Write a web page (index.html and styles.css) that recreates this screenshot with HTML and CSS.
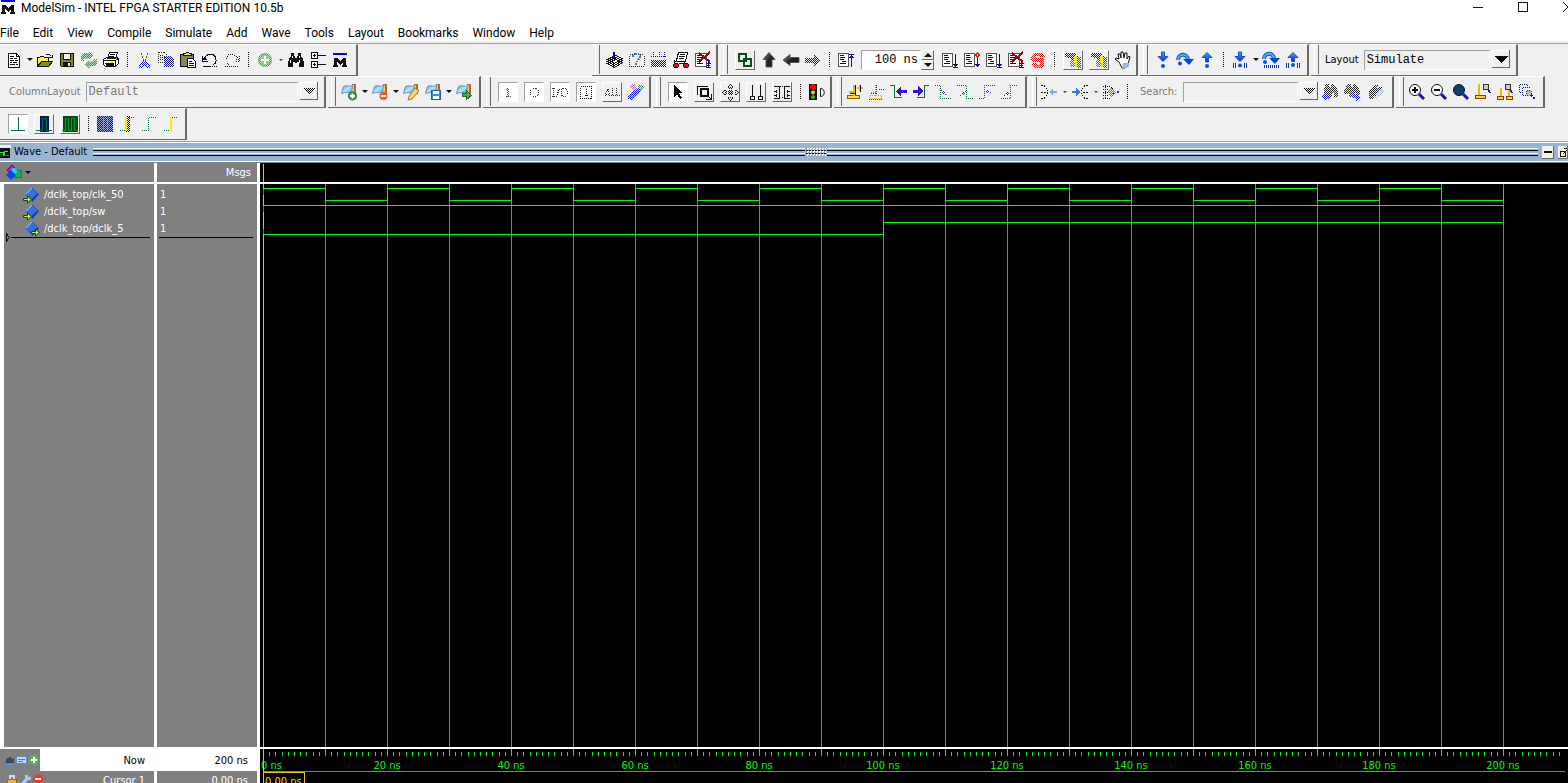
FILE: index.html
```html
<!DOCTYPE html>
<html lang="en">
<head>
<meta charset="utf-8">
<title>ModelSim - INTEL FPGA STARTER EDITION 10.5b</title>
<link rel="stylesheet" href="styles.css">
</head>
<body>
<svg class="sprite" aria-hidden="true">
<defs>
<pattern id="dk" width="2" height="2" patternUnits="userSpaceOnUse"><path fill="#222" d="M0 0h1v1h-1zM1 1h1v1h-1z"/></pattern>
<pattern id="dg" width="2" height="2" patternUnits="userSpaceOnUse"><path fill="#3a9a3a" d="M0 0h1v1h-1zM1 1h1v1h-1z"/></pattern>
<pattern id="db" width="2" height="2" patternUnits="userSpaceOnUse"><path fill="#1c1cf0" d="M0 0h1v1h-1zM1 1h1v1h-1z"/></pattern>
<pattern id="dn" width="2" height="2" patternUnits="userSpaceOnUse"><path fill="#101080" d="M0 0h1v1h-1zM1 1h1v1h-1z"/></pattern>
<pattern id="dr" width="2" height="2" patternUnits="userSpaceOnUse"><path fill="#e01010" d="M0 0h1v1h-1zM1 1h1v1h-1z"/></pattern>
<pattern id="dp" width="2" height="2" patternUnits="userSpaceOnUse"><path fill="#b070c0" d="M0 0h1v1h-1zM1 1h1v1h-1z"/></pattern>
<linearGradient id="glass" x1="0" y1="0" x2="1" y2="1"><stop offset="0" stop-color="#3fa0e0"/><stop offset=".5" stop-color="#b8e6ff"/><stop offset="1" stop-color="#2f8ad0"/></linearGradient>
<linearGradient id="steel" x1="0" y1="0" x2="1" y2="1"><stop offset="0" stop-color="#888"/><stop offset=".5" stop-color="#222"/><stop offset="1" stop-color="#111"/></linearGradient>
<linearGradient id="azure" x1="0" y1="0" x2="0" y2="1"><stop offset="0" stop-color="#38a8f8"/><stop offset="1" stop-color="#0828d8"/></linearGradient>
</defs>
<symbol id="page" viewBox="0 0 18 18"><path fill="#fff" stroke="#111" d="M3.500 2.500h8l3 3v11h-11z"/><path fill="none" stroke="#111" d="M11.500 2.500v3h3M5 5.500h4M5 7.500h3m1 0h3M5 9.500h4m1 0h3M5 11.500h2m1 0h4M5 13.500h5m1 0h2"/></symbol>
<symbol id="open" viewBox="0 0 18 18"><path fill="#ffef60" stroke="#111" d="M1.500 15.500v-9h2l1-1h3l1 1h4v3"/><path fill="#8c8c10" stroke="#111" d="M1.500 15.500l4-5h11l-4 5z"/><path fill="none" stroke="#111" d="M9.500 4.500l1-1h3l2 2M13 6.500h3.500v-3"/></symbol>
<symbol id="save" viewBox="0 0 18 18"><path fill="#868614" stroke="#111" d="M2.500 2.500h13v13h-12l-1-1z"/><path fill="#f0f0f0" stroke="#111" d="M5.500 2.500h7v6h-7z"/><path fill="#111" d="M5 11h8v4H5z"/><path fill="#eee" d="M10 12h2v3h-2z"/></symbol>
<symbol id="reload" viewBox="0 0 18 18"><path fill="#b4dcb4" d="M2 4l6-2 1-1v2l4 1-4 3-2 1H1zM16 14l-6 2-1 1v-2l-4-1 4-3 2-1h6z"/><path fill="url(#dg)" d="M1 5l3-3h5V1l5 4-5 4V7H5l-1 3H1zM17 12l-3 3H9v2l-5-4 5-4v2h4l1-3h3z"/></symbol>
<symbol id="print" viewBox="0 0 18 18"><path fill="#fff" stroke="#111" d="M5.500 7.500l2-6h8l-2 6zM1.500 8.500l3-2h11l1 2v4l-3 3h-10l-2-2z"/><path fill="none" stroke="#111" d="M8 3.500h5M7 5.500h5M2 9.500h11v5M3 12.500h9M14 9l3-2"/><path fill="#e6dc20" d="M8 11h3v1H8z"/><path fill="#111" d="M4 13h8v2H4z"/></symbol>
<symbol id="cut" viewBox="0 0 18 18"><path fill="#555" d="M6 2h1v2H6zM7 5h1v2H7zM8 8h1v2H8zM12 2h1v2h-1zM11 5h1v2h-1zM10 8h1v2h-1z"/><path fill="url(#db)" d="M8 10h4v1l3 2v4h-3l-2-3-2 3H4v-4l4-2z"/><path fill="#f0f0f0" d="M6 14h1v1H6zM12 14h1v1h-1z"/></symbol>
<symbol id="copy" viewBox="0 0 18 18"><path fill="none" stroke="#222" stroke-dasharray="1 1" d="M1.500 1.500h6l2 2v8h-8zM3 4.500h4M3 6.500h5M3 8.500h4"/><path fill="url(#dn)" d="M7 5h7l3 3v8H7z"/></symbol>
<symbol id="paste" viewBox="0 0 18 18"><path fill="#85855a" stroke="#111" d="M1.500 3.500h13v12h-13z"/><path fill="#efe460" stroke="#111" d="M4.500 4.500v-2h2l1-1h2l1 1h2v2z"/><path fill="#fff" stroke="#00007a" d="M8.500 7.500h5l3 3v6h-8z"/><path stroke="#00007a" d="M10 10.500h3M10 12.500h5M10 14.500h5"/></symbol>
<symbol id="undo" viewBox="0 0 18 18"><path fill="none" stroke="#111" d="M3.500 7.500c2-5 9-6 11-1s-1 7-3 7M1.500 5v5h5M2 7.500h3M2 8.500h4M2 15.500h8"/><path stroke="#111" stroke-dasharray="1 1" d="M11 15.500h6"/></symbol>
<symbol id="redo" viewBox="0 0 18 18"><path fill="none" stroke="#222" stroke-dasharray="1 1" d="M14.500 7.500c-2-5-9-6-11-1s1 7 3 7M16.500 5v5h-5M13 8.500h4M2 15.500h14"/></symbol>
<symbol id="go" viewBox="0 0 18 18"><circle cx="9" cy="9" r="7" fill="#b7e3b5"/><circle cx="9" cy="9" r="7" fill="url(#dg)"/><circle cx="9" cy="9" r="5" fill="#8fd08d"/><path fill="#fff" d="M8 5h2v3h3v2h-3v3H8v-3H5V8h3z"/></symbol>
<symbol id="find" viewBox="0 0 18 18"><path fill="#111" d="M4 2h3v3h1v2h2V5h1V2h3v3l2 3v2h1v6h-5v-5h-2v1H8v-1H6v5H1v-6h1V8l2-3z"/><path fill="#fff" d="M5 5h1v2H5zM3 9h1v3H3zM12 5h1v2h-1zM12 9h1v3h-1z"/></symbol>
<symbol id="tree" viewBox="0 0 18 18"><path fill="#fff" stroke="#111" d="M2.500 1.500h6v6h-6zM2.500 10.500h6v6h-6z"/><path stroke="#111" d="M4 4.500h3M5.500 3v3M4 13.500h3M5.500 12v3M9 4.500h8M9 13.500h8"/></symbol>
<symbol id="logo" viewBox="0 0 18 18"><path fill="#0000f0" d="M2 2h14v2H2z"/><path fill="#111" d="M3 7h3l3 3 3-3h3v7h1v2h-5v-2h1v-3l-3 3-3-3v3h1v2H2v-2h1z"/></symbol>
<symbol id="compile" viewBox="0 0 18 18"><path fill="#fff" stroke="#111" d="M1.500 12.500l8-4 7 3-8 5zM1.500 10.500l8-4 7 3-8 5zM1.500 8.500l8-4 7 3-8 5z"/><path fill="#00008c" d="M7 1h2v5h2l-3 3-3-3h2z"/></symbol>
<symbol id="help" viewBox="0 0 18 18"><path fill="none" stroke="#222" stroke-dasharray="1 1" d="M1.500 4.500v11h13l2-2v-10M2 3.500h14M1 15.500h15"/><path fill="none" stroke="#2a80c8" stroke-width="2" stroke-dasharray="2 1" d="M5 6c0-4 8-4 7 0 0 2-3 2-3 5M8 12v2"/></symbol>
<symbol id="grid" viewBox="0 0 18 18"><path fill="url(#dk)" d="M1 9h15v7H1z"/><path fill="none" stroke="#10108c" stroke-dasharray="1 1" d="M3.500 1v6M9.500 1v6M14.500 1v6M1 5.500h15"/></symbol>
<symbol id="simulate" viewBox="0 0 18 18"><path fill="#fff" stroke="#111" d="M4.500 9.500l2-8h9l-2 9h-9z"/><path fill="none" stroke="#111" d="M8 3.500h5M7 5.500h6M7 7.500h5M2.500 9v4M2 10.500h10v2h-5M12 12.500h4"/><circle cx="4" cy="14.500" r="2.500" fill="#d01030" stroke="#400"/><circle cx="14" cy="14.500" r="2.500" fill="#d01030" stroke="#400"/></symbol>
<symbol id="stop" viewBox="0 0 18 18"><path fill="#fff" stroke="#555" d="M1.500 2.500h11v13h-11z"/><path stroke="#111" d="M3 4.500h4M3 6.500h6M3 8.500h5M3 10.500h4M3 12.500h6"/><path stroke="#8c1010" stroke-width="2" d="M5 2l11 9M16 1L5 11"/><path fill="none" stroke="#10108c" d="M14.500 9v7M12 12.500h5M12 16.500h5M13 14.500h3"/></symbol>
<symbol id="restart" viewBox="0 0 18 18"><path fill="#fff" stroke="#555" d="M1.500 2.500h10v13h-10z"/><path stroke="#111" d="M3 4.500h4M3 6.500h5M3 8.500h4M5 10.500h4M3 12.500h6"/><path fill="none" stroke="#10108c" d="M14.500 3v13M12 3.500h5M12 6.500h5M13 5.500h3"/></symbol>
<symbol id="run" viewBox="0 0 18 18"><path fill="#fff" stroke="#555" d="M1.500 2.500h10v13h-10z"/><path stroke="#111" d="M3 4.500h4M3 6.500h5M3 8.500h4M5 10.500h4M3 12.500h6"/><path fill="none" stroke="#10108c" d="M14.500 3v13M12 13.500h5M12 16.500h5M13 14.500h3"/></symbol>
<symbol id="cont" viewBox="0 0 18 18"><path fill="#fff" stroke="#555" d="M1.500 2.500h10v13h-10z"/><path stroke="#111" d="M3 4.500h4M3 6.500h5M3 8.500h4M5 10.500h4M3 12.500h6"/><path fill="none" stroke="#10108c" d="M14.500 7v9M12 13.500h5M13 14.500h3"/><path fill="none" stroke="#e02020" d="M14.500 2l2 2-2 2-2-2z"/></symbol>
<symbol id="brk" viewBox="0 0 18 18"><path fill="url(#dr)" d="M6 2h6l4 4h-4l-2-1H7v2h8v7l-3 3H6l-4-3 1-2h3l2 2h3v-3H4L2 9V6z"/></symbol>
<symbol id="links" viewBox="0 0 18 18"><path fill="none" stroke="#064f18" stroke-width="2" d="M3 3h7v7H3zM8 8h7v7H8z"/></symbol>
<symbol id="up" viewBox="0 0 18 18"><path fill="url(#steel)" stroke="#555" d="M9 1.500l6 7h-3v7.500H6V8.500H3z"/></symbol>
<symbol id="left" viewBox="0 0 18 18"><path fill="url(#steel)" stroke="#555" d="M1 9l7-5.500v3h9v5H8v3z"/></symbol>
<symbol id="right" viewBox="0 0 18 18"><path fill="url(#dk)" d="M17 9l-7-6v4H1v5h9v4z"/></symbol>
<symbol id="mem" viewBox="0 0 18 18"><path fill="url(#dk)" d="M1 2h11v3h2v3H9v2H7V7H3V6H1z"/><path fill="url(#dg)" d="M6 9h5v7H6z"/><path fill="#f4e820" d="M10 5h3v11h-2v-4h-1z"/><path fill="url(#dr)" d="M13 6h4v11h-4z"/></symbol>
<symbol id="hand" viewBox="0 0 18 18"><path fill="#fff" stroke="#111" d="M5 11L1 8l1-1 3 1-1-5h2l1 4V1h2l1 6 1-5h2v6l2-3 1 1-2 7-3 4H8z"/><path fill="#9ab6d8" d="M9 12h6v4l-3 1H8z"/></symbol>
<symbol id="stepin" viewBox="0 0 18 18"><path fill="url(#azure)" stroke="#1450d8" d="M7.500 1h3v4.500h3.500l-5 5-5-5h3.500z"/><circle cx="9" cy="15" r="2" fill="#174bd8"/></symbol>
<symbol id="stepover" viewBox="0 0 18 18"><path fill="none" stroke="#0b52d8" stroke-width="4" d="M2 9c0-6 9-8 10 0"/><path fill="none" stroke="#48b0f8" stroke-width="2" d="M2 9c0-6 9-8 10 0"/><path fill="#0b42d8" d="M7 8h11l-5 6z"/><circle cx="4" cy="12.500" r="2" fill="#174bd8"/></symbol>
<symbol id="stepout" viewBox="0 0 18 18"><path fill="url(#azure)" stroke="#1450d8" d="M9 1.500l5 5h-3.500v4.500h-3V6.500H4z"/><circle cx="9" cy="15" r="2" fill="#174bd8"/></symbol>
<symbol id="instin" viewBox="0 0 18 18"><path fill="url(#azure)" stroke="#1450d8" d="M7.500 1h3v4.500h3.500l-5 5-5-5h3.500z"/><path stroke="#0a36c8" d="M2.500 12v5M4.500 12v5M13.500 12v5M15.500 12v5"/><circle cx="9" cy="14.500" r="2" fill="#174bd8"/></symbol>
<symbol id="instover" viewBox="0 0 18 18"><path fill="none" stroke="#0b52d8" stroke-width="4" d="M2 8c0-6 9-8 10 0"/><path fill="none" stroke="#48b0f8" stroke-width="2" d="M2 8c0-6 9-8 10 0"/><path fill="#0b42d8" d="M7 7h11l-5 6z"/><circle cx="3" cy="11" r="2" fill="#174bd8"/><path stroke="#0a36c8" d="M2.500 14v3M4.500 14v3M6.500 14v3M8.500 14v3M10.500 14v3M12.500 14v3M14.500 14v3M16.500 14v3"/></symbol>
<symbol id="instout" viewBox="0 0 18 18"><path fill="url(#azure)" stroke="#1450d8" d="M9 1.500l5 5h-3.500v4h-3v-4H4z"/><path stroke="#0a36c8" d="M2.500 12v5M4.500 12v5M13.500 12v5M15.500 12v5"/><circle cx="9" cy="14" r="2" fill="#174bd8"/></symbol>
<symbol id="scroll" viewBox="0 0 18 18"><path fill="#b0682c" d="M12 1h4v10h-4z"/><path fill="#ecc080" d="M12 2h2v8h-2z"/><path fill="url(#glass)" stroke="#5898c8" d="M3.500 3.500c3-2 6 1 9-1l-1 7c-3 1-6-1-10 1z"/></symbol>
<symbol id="plus" viewBox="0 0 18 18"><circle cx="12.500" cy="13" r="4" fill="#4a9a48" stroke="#286a28"/><path stroke="#fff" stroke-width="2" d="M10 13h5M12.500 10.500v5"/></symbol>
<symbol id="minus" viewBox="0 0 18 18"><circle cx="12.500" cy="13" r="4" fill="#e85a20"/><path stroke="#fff" stroke-width="2" d="M10 13h5"/></symbol>
<symbol id="pen" viewBox="0 0 18 18"><path fill="#f8d070" stroke="#b07a20" d="M13 5l4 3-7 8-4 1 1-4z"/></symbol>
<symbol id="disk" viewBox="0 0 18 18"><path fill="#4588d8" stroke="#2858a0" d="M7.500 7.500h9v9h-9z"/><path fill="#fff" d="M9 8h6v3H9zM9 13h6v3H9z"/></symbol>
<symbol id="garrow" viewBox="0 0 18 18"><path fill="#4fae48" stroke="#246a20" d="M7.500 10.500h4v-3l5 5-5 4v-3h-4z"/></symbol>
<symbol id="in" viewBox="0 0 18 18"><path fill="none" stroke="#555" stroke-dasharray="1 1" d="M8.500 5v9M9.500 6v8M7 13.500h5M7 6.500h2"/></symbol>
<symbol id="out" viewBox="0 0 18 18"><path fill="none" stroke="#333" stroke-dasharray="1 1" d="M7.500 5.500h4l2 2v4l-2 2h-4l-2-2v-4z"/></symbol>
<symbol id="io" viewBox="0 0 18 18"><path fill="none" stroke="#333" stroke-dasharray="1 1" d="M1 5.500h3M2.500 5v9M1 13.500h3M5.500 14l3-9M11.500 5.500h3l2 2v4l-2 2h-3l-1-2v-4z"/></symbol>
<symbol id="internal" viewBox="0 0 18 18"><path fill="none" stroke="#111" stroke-dasharray="1 1" d="M3.500 3.500h11v12h-11zM9.500 6v7M8 12.500h4"/></symbol>
<symbol id="all" viewBox="0 0 18 18"><path fill="none" stroke="#333" stroke-dasharray="1 1" d="M2 13l3-8 2 8M3 11.500h4M9.500 5v8M8 12.500h4M13.500 5v8M12 12.500h5"/></symbol>
<symbol id="wrench" viewBox="0 0 18 18"><path fill="url(#dp)" d="M4 1h4l3 5-3 2-5-3z"/><path fill="url(#dg)" d="M11 2h4l2 3-2 2h-3z"/><path fill="#c4d8f8" d="M8 7l4-2 2 3-9 9-4-1v-3z"/><path fill="url(#db)" d="M8 7l4-2 2 3-9 9-4-1v-3z"/></symbol>
<symbol id="pointer" viewBox="0 0 18 18"><path fill="#000" d="M5 2l9 8h-4l3 5-2 1-3-5-3 3z"/></symbol>
<symbol id="zoombox" viewBox="0 0 18 18"><path fill="none" stroke="#111" d="M2.500 11.500v-8h10"/><path fill="none" stroke="#111" stroke-width="2" d="M6 6h7v7H6z"/><path fill="none" stroke="#111" d="M12 12l4 4M16.500 11v5.500H11"/></symbol>
<symbol id="pan" viewBox="0 0 18 18"><path fill="none" stroke="#111" stroke-dasharray="1 1" d="M8.500 5v8M10.500 5v8M5 8.500h8M5 10.500h8M7 4.500h5M7 14.500h5M4.500 7v5M14.500 7v5"/><path fill="#222" d="M9 1h1v1H9zM8 2h1v1H8zM10 2h1v1h-1zM7 3h1v1H7zM11 3h1v1h-1zM9 17h1v1H9zM8 16h1v1H8zM10 16h1v1h-1zM7 15h1v1H7zM11 15h1v1h-1zM1 9h1v1H1zM2 8h1v1H2zM2 10h1v1H2zM3 7h1v1H3zM3 11h1v1H3zM17 9h1v1h-1zM16 8h1v1h-1zM16 10h1v1h-1zM15 7h1v1h-1zM15 11h1v1h-1z"/></symbol>
<symbol id="twoc" viewBox="0 0 18 18"><path fill="none" stroke="#111" d="M5.500 2v12M13.500 2v12M3.500 13.500h4v3h-4zM11.500 13.500h4v3h-4z"/></symbol>
<symbol id="edit" viewBox="0 0 18 18"><path fill="none" stroke="#111" d="M1 3.500h7M6.500 3v13M1 15.500h6M11 3.500h6M11.500 3v13M11 15.500h6M1 8.500h3M1 12.500h3M14 8.500h3M14 12.500h3"/><path stroke="#111" stroke-dasharray="1 1" d="M3.500 7v3M3.500 11v3M14.500 7v3M14.500 11v3M9.500 3v1M9.500 14v2"/></symbol>
<symbol id="traffic" viewBox="0 0 18 18"><path fill="#111" d="M1 1h8v16H1z"/><circle cx="5" cy="4" r="3" fill="#f00"/><circle cx="5" cy="9.500" r="2" fill="#e8c838"/><circle cx="5" cy="14" r="2" fill="#18c818"/><path fill="#fff" stroke="#111" d="M12.500 5.500c5 0 5 8 0 8z"/></symbol>
<symbol id="addcur" viewBox="0 0 18 18"><path fill="#ffe030" stroke="#806000" d="M1.500 12.500h12v3h-12z"/><path fill="none" stroke="#e8bc00" stroke-width="2" d="M8 2v11M3 9h5M11 5h6M14 2v6"/><path stroke="#111" d="M9.500 2v10M4 10.500h5M14.500 2v7"/></symbol>
<symbol id="delcur" viewBox="0 0 18 18"><path fill="none" stroke="#d0a800" stroke-dasharray="1 1" d="M1.500 12.500h12v3h-12zM7.500 2v11M3 9.500h5"/><path stroke="#333" stroke-dasharray="1 1" d="M8.500 2v10M11 6.500h6M3 10.500h5M1 16.500h13"/></symbol>
<symbol id="prevt" viewBox="0 0 18 18"><path fill="none" stroke="#087030" d="M0 2.500h4.500v12H12"/><path fill="#3410d0" d="M6 8l5-5v4h6v3h-6v4z"/></symbol>
<symbol id="nextt" viewBox="0 0 18 18"><path fill="none" stroke="#087030" d="M17 2.500h-4.500v12H5"/><path fill="#3410d0" d="M11 8L6 3v4H1v3h5v4z"/></symbol>
<symbol id="fall" viewBox="0 0 18 18"><path fill="none" stroke="#087030" stroke-dasharray="1 1" d="M1 2.500h5.500v13H17"/><path fill="#4020c8" d="M7 7h1v1H7zM8 9h1v1H8zM10 9h1v1h-1zM9 8h1v1H9zM9 10h1v1H9zM11 11h1v1h-1z"/></symbol>
<symbol id="fall2" viewBox="0 0 18 18"><path fill="none" stroke="#087030" stroke-dasharray="1 1" d="M1 2.500h9.500v13H17"/><path fill="#4020c8" d="M4 12h1v1H4zM6 10h1v1H6zM7 9h1v1H7zM8 10h1v1H8zM7 11h1v1H7zM9 8h1v1H9z"/></symbol>
<symbol id="rise" viewBox="0 0 18 18"><path fill="none" stroke="#087030" stroke-dasharray="1 1" d="M1 15.500h5.500v-13H17"/><path fill="#4020c8" d="M8 8h1v1H8zM10 8h1v1h-1zM9 7h1v1H9zM9 9h1v1H9zM12 9h1v1h-1z"/></symbol>
<symbol id="rise2" viewBox="0 0 18 18"><path fill="none" stroke="#087030" stroke-dasharray="1 1" d="M1 15.500h9.500v-13H17"/><path fill="#4020c8" d="M4 12h1v1H4zM6 10h1v1H6zM7 9h1v1H7zM8 10h1v1H8zM7 11h1v1H7z"/></symbol>
<symbol id="merge" viewBox="0 0 18 18"><path fill="none" stroke="#111" stroke-dasharray="2 1" d="M1 2.500h3l4 5M1 9.500h7M1 15.500h3l4-5"/><path fill="#78acf4" d="M9 9l4-4v3h4v2h-4v3z"/></symbol>
<symbol id="split" viewBox="0 0 18 18"><path fill="none" stroke="#111" stroke-dasharray="2 1" d="M17 2.500h-3l-4 5M17 9.500h-6M17 15.500h-3l-4-5"/><path fill="#3078e0" d="M9 9L5 5v3H1v2h4v3z"/></symbol>
<symbol id="chip" viewBox="0 0 18 18"><path fill="none" stroke="#111" stroke-dasharray="1 1" d="M1 3.500h8M1 6.500h6M1 9.500h6M1 12.500h6M1 15.500h8M3.500 2v14M9 4l4 5-4 5"/><path fill="url(#dg)" d="M9 5l5 4-5 5-3-5z"/><path fill="#2828d0" d="M15 8h2v2h-2z"/></symbol>
<symbol id="findp" viewBox="0 0 18 18"><path fill="url(#dk)" d="M5 1h3v3h2V1h3l4 7v6h-4v-4h-2v4H3V7z"/><path fill="url(#db)" d="M1 14l4-5v3h4v4H5v2z"/></symbol>
<symbol id="findn" viewBox="0 0 18 18"><path fill="url(#dk)" d="M5 1h3v3h2V1h3l4 7v4h-4v-2h-2v4H6v-3H1V7z"/><path fill="url(#db)" d="M9 11h4v-1l4 4-4 4v-3H9z"/></symbol>
<symbol id="findo" viewBox="0 0 18 18"><path fill="url(#dk)" d="M2 9l6-7h3l-1 3 5-2v5l-5 3-3 5H2z"/><path stroke="#b8c8e8" stroke-width="3" stroke-dasharray="2 1" d="M8 15l8-8"/></symbol>
<symbol id="zin" viewBox="0 0 18 18"><circle cx="7" cy="7" r="5.500" fill="#fff" stroke="#111"/><path stroke="#111" stroke-width="2" d="M4 7h6M7 4v6"/><path stroke="#1414c0" stroke-width="3" d="M11 11l5 5"/></symbol>
<symbol id="zout" viewBox="0 0 18 18"><circle cx="7" cy="7" r="5.500" fill="#fff" stroke="#111"/><path stroke="#111" stroke-width="2" d="M4 7h6"/><path stroke="#1414c0" stroke-width="3" d="M11 11l5 5"/></symbol>
<symbol id="zfull" viewBox="0 0 18 18"><circle cx="7" cy="7" r="5.500" fill="#0b4070" stroke="#111"/><path stroke="#1414c0" stroke-width="3" d="M11 11l5 5"/></symbol>
<symbol id="zcur" viewBox="0 0 18 18"><path stroke="#e8bc00" stroke-width="2" d="M5 1v12"/><path fill="#ffd820" stroke="#804000" d="M1.500 12.500h10v3h-10z"/><circle cx="12" cy="4" r="3" fill="#ccc" stroke="#333"/><path stroke="#1414d0" stroke-width="2" d="M14 6l2 4"/></symbol>
<symbol id="ztwo" viewBox="0 0 18 18"><path stroke="#e8bc00" stroke-width="2" d="M5 5v9M13 5v9"/><path fill="#ffd820" stroke="#804000" d="M1.500 13.500h6v3h-6zM10.500 13.500h6v3h-6z"/><circle cx="12" cy="4" r="3" fill="#ccc" stroke="#333"/><path stroke="#1414d0" stroke-width="2" d="M14 6l2 4"/></symbol>
<symbol id="zother" viewBox="0 0 18 18"><path fill="none" stroke="#10108c" stroke-dasharray="1 1" d="M1.500 1.500h8v3M1.500 1.500v8h3M4.500 4.500h8M4.500 4.500v8h3"/><circle cx="11" cy="10" r="3" fill="#bbb" stroke="#333" stroke-dasharray="1 1"/><path stroke="#1414d0" stroke-width="2" stroke-dasharray="2 1" d="M13 12l4 4"/></symbol>
<symbol id="w1" viewBox="0 0 18 18"><path stroke="#087038" d="M9.500 2v13M2 15.500h14"/></symbol>
<symbol id="w2" viewBox="0 0 18 18"><path fill="#10106e" d="M5 1h9v16H5z"/><path fill="none" stroke="#087038" d="M1 15.500h6.500v-12h4v12H17"/></symbol>
<symbol id="w3" viewBox="0 0 18 18"><path fill="#064a06" d="M2 1h15v16H2z"/><path fill="none" stroke="#089838" d="M1 15.500h3.500v-12h3v12h3v-12h3v12H17"/></symbol>
<symbol id="w4" viewBox="0 0 18 18"><path fill="#9aa6d8" d="M1 1h16v16H1z"/><path fill="url(#dn)" d="M1 1h16v16H1z"/><path stroke="#3a9a3a" stroke-dasharray="1 1" d="M7.500 3v12M11.500 3v12"/></symbol>
<symbol id="w5" viewBox="0 0 18 18"><path fill="url(#dn)" d="M8 1h4v16H8z"/><path fill="none" stroke="#087038" stroke-dasharray="1 1" d="M2 15.500h5M11 2.500h6"/><path stroke="#ffe800" stroke-width="2" d="M8 2v14"/></symbol>
<symbol id="w6" viewBox="0 0 18 18"><path fill="none" stroke="#087038" stroke-dasharray="1 1" d="M2 15.500h6.500v-13H16"/></symbol>
<symbol id="w7" viewBox="0 0 18 18"><path fill="none" stroke="#087038" stroke-dasharray="1 1" d="M2 15.500h6M10 2.500h6"/><path stroke="#ffe800" stroke-width="2" d="M9 2v14"/></symbol>
<symbol id="gem" viewBox="0 0 18 18"><path fill="#2c64dc" d="M10 1l7 7-7 8-7-8z"/><path fill="#7fa6f8" d="M10 1v7H3z"/><path fill="#3a6ce4" d="M10 3l5 5-5 5-5-5z"/><path fill="#123a9c" d="M10 16v-3l5-5h2z"/></symbol>
<symbol id="gem-in" viewBox="0 0 18 18"><path fill="#a8f838" stroke="#1a3c08" d="M1.500 12.500h4v-2.500l4 3.500-4 3.500v-2.500h-4z"/></symbol>
<symbol id="gem-out" viewBox="0 0 18 18"><path fill="#a8f838" stroke="#1a3c08" d="M9.500 11.500h4v-2.500l4 3.500-4 3.500v-2.500h-4z"/></symbol>
<symbol id="objects" viewBox="0 0 18 18"><path fill="#c018d8" stroke="#401048" d="M2 6l5-5 5 5-4 4z"/><path fill="#18b048" stroke="#084" d="M9.500 6.500h7v7h-7z"/><circle cx="9" cy="7" r="3" fill="#18d8f8"/><path fill="#0848e8" d="M6 6l5 5-5 5-5-5z"/></symbol>
</svg>

<header class="titlebar">
  <svg class="icon"><use href="#logo"/></svg>
  <h1>ModelSim - INTEL FPGA STARTER EDITION 10.5b</h1>
  <div class="winbtns">
    <button aria-label="Minimize"><svg width="12" height="12"><path stroke="#111" d="M1 6.500h10"/></svg></button>
    <button aria-label="Maximize"><svg width="12" height="12"><path fill="none" stroke="#111" d="M1.500 1.500h9v9h-9z"/></svg></button>
    <button aria-label="Close"><svg width="12" height="12"><path stroke="#111" d="M1 1l10 10M11 1L1 11"/></svg></button>
  </div>
</header>
<nav class="menubar">
  <button>File</button><button>Edit</button><button>View</button><button>Compile</button><button>Simulate</button><button>Add</button><button>Wave</button><button>Tools</button><button>Layout</button><button>Bookmarks</button><button>Window</button><button>Help</button>
</nav>

<section class="toolbars">
  <div class="row">
    <div class="group first g-file">
      <button class="tool" aria-label="New"><svg class="icon"><use href="#page"/></svg></button><button class="drop" aria-label="New menu"></button>
      <button class="tool" aria-label="Open"><svg class="icon"><use href="#open"/></svg></button>
      <button class="tool" aria-label="Save"><svg class="icon"><use href="#save"/></svg></button>
      <button class="tool" aria-label="Reload"><svg class="icon"><use href="#reload"/></svg></button>
      <button class="tool" aria-label="Print"><svg class="icon"><use href="#print"/></svg></button>
      <i class="sep"></i>
      <button class="tool" aria-label="Cut"><svg class="icon"><use href="#cut"/></svg></button>
      <button class="tool" aria-label="Copy"><svg class="icon"><use href="#copy"/></svg></button>
      <button class="tool" aria-label="Paste"><svg class="icon"><use href="#paste"/></svg></button>
      <button class="tool" aria-label="Undo"><svg class="icon"><use href="#undo"/></svg></button>
      <button class="tool" aria-label="Redo"><svg class="icon"><use href="#redo"/></svg></button>
      <i class="sep"></i>
      <button class="tool" aria-label="Add selected"><svg class="icon"><use href="#go"/></svg></button><button class="drop small" aria-label="Add menu"></button>
      <button class="tool" aria-label="Find"><svg class="icon"><use href="#find"/></svg></button>
      <button class="tool" aria-label="Collapse all"><svg class="icon"><use href="#tree"/></svg></button>
      <button class="tool" aria-label="ModelSim"><svg class="icon"><use href="#logo"/></svg></button>
    </div>
    <div class="spacer"></div>
    <div class="group g-compile">
      <button class="tool" aria-label="Compile"><svg class="icon"><use href="#compile"/></svg></button>
      <button class="tool" aria-label="Compile out of date"><svg class="icon"><use href="#help"/></svg></button>
      <button class="tool" aria-label="Compile all"><svg class="icon"><use href="#grid"/></svg></button>
      <button class="tool" aria-label="Simulate"><svg class="icon"><use href="#simulate"/></svg></button>
      <button class="tool" aria-label="Break simulation"><svg class="icon"><use href="#stop"/></svg></button>
    </div>
    <div class="group g-sim">
      <button class="tool boxed" aria-label="Environment"><svg class="icon"><use href="#links"/></svg></button>
      <button class="tool" aria-label="Up"><svg class="icon"><use href="#up"/></svg></button>
      <button class="tool" aria-label="Back"><svg class="icon"><use href="#left"/></svg></button>
      <button class="tool" aria-label="Forward"><svg class="icon"><use href="#right"/></svg></button>
      <i class="sep"></i>
      <button class="tool" aria-label="Restart"><svg class="icon"><use href="#restart"/></svg></button>
      <div class="spin"><input type="text" value="100 ns" aria-label="Run length"><div><button class="inc" aria-label="Increase"></button><button class="dec" aria-label="Decrease"></button></div></div>
      <button class="tool" aria-label="Run"><svg class="icon"><use href="#run"/></svg></button>
      <button class="tool" aria-label="Continue run"><svg class="icon"><use href="#cont"/></svg></button>
      <button class="tool" aria-label="Run all"><svg class="icon"><use href="#run"/></svg></button>
      <button class="tool" aria-label="Break"><svg class="icon"><use href="#stop"/></svg></button>
      <button class="tool" aria-label="Stop"><svg class="icon"><use href="#brk"/></svg></button>
      <i class="sep"></i>
      <button class="tool boxed" aria-label="Profile"><svg class="icon"><use href="#mem"/></svg></button>
      <button class="tool boxed" aria-label="Memory profile"><svg class="icon"><use href="#mem"/></svg></button>
      <button class="tool" aria-label="Hold"><svg class="icon"><use href="#hand"/></svg></button>
    </div>
    <div class="group g-step">
      <button class="tool" aria-label="Step into"><svg class="icon"><use href="#stepin"/></svg></button>
      <button class="tool" aria-label="Step over"><svg class="icon"><use href="#stepover"/></svg></button>
      <button class="tool" aria-label="Step out"><svg class="icon"><use href="#stepout"/></svg></button>
      <i class="sep"></i>
      <button class="tool" aria-label="Step instance"><svg class="icon"><use href="#instin"/></svg></button><button class="drop" aria-label="Step menu"></button>
      <button class="tool" aria-label="Step over instance"><svg class="icon"><use href="#instover"/></svg></button>
      <button class="tool" aria-label="Step out instance"><svg class="icon"><use href="#instout"/></svg></button>
    </div>
    <div class="group g-layout">
      <label for="layout">Layout</label>
      <select id="layout" class="combo"><option>Simulate</option></select>
    </div>
  </div>

  <div class="row">
    <div class="group first g-columns">
      <label for="columns" class="dim">ColumnLayout</label>
      <select id="columns" class="combo dim"><option>Default</option></select>
    </div>
    <div class="group g-bookmark">
      <button class="tool" aria-label="Add bookmark"><svg class="icon"><use href="#scroll"/><use href="#plus"/></svg></button><button class="drop" aria-label="Add bookmark menu"></button>
      <button class="tool" aria-label="Delete bookmark"><svg class="icon"><use href="#scroll"/><use href="#minus"/></svg></button><button class="drop" aria-label="Delete bookmark menu"></button>
      <button class="tool" aria-label="Edit bookmark"><svg class="icon"><use href="#scroll"/><use href="#pen"/></svg></button>
      <button class="tool" aria-label="Save bookmark"><svg class="icon"><use href="#scroll"/><use href="#disk"/></svg></button><button class="drop" aria-label="Save bookmark menu"></button>
      <button class="tool" aria-label="Go to bookmark"><svg class="icon"><use href="#scroll"/><use href="#garrow"/></svg></button>
    </div>
    <div class="group g-filter">
      <button class="tool boxed sunk" aria-label="Inputs"><svg class="icon"><use href="#in"/></svg></button>
      <button class="tool boxed sunk" aria-label="Outputs"><svg class="icon"><use href="#out"/></svg></button>
      <button class="tool boxed sunk" aria-label="Inouts"><svg class="icon"><use href="#io"/></svg></button>
      <button class="tool boxed sunk" aria-label="Internals"><svg class="icon"><use href="#internal"/></svg></button>
      <button class="tool boxed" aria-label="All"><svg class="icon"><use href="#all"/></svg></button>
      <button class="tool" aria-label="Filter settings"><svg class="icon"><use href="#wrench"/></svg></button>
    </div>
    <div class="group g-mode">
      <button class="tool boxed sunk" aria-label="Select mode"><svg class="icon"><use href="#pointer"/></svg></button>
      <button class="tool boxed" aria-label="Zoom mode"><svg class="icon"><use href="#zoombox"/></svg></button>
      <button class="tool boxed" aria-label="Pan mode"><svg class="icon"><use href="#pan"/></svg></button>
      <button class="tool boxed" aria-label="Two cursor mode"><svg class="icon"><use href="#twoc"/></svg></button>
      <button class="tool boxed" aria-label="Edit mode"><svg class="icon"><use href="#edit"/></svg></button>
      <i class="sep"></i>
      <button class="tool" aria-label="Stop drawing"><svg class="icon"><use href="#traffic"/></svg></button>
    </div>
    <div class="group g-cursor">
      <button class="tool" aria-label="Insert cursor"><svg class="icon"><use href="#addcur"/></svg></button>
      <button class="tool" aria-label="Delete cursor"><svg class="icon"><use href="#delcur"/></svg></button>
      <button class="tool" aria-label="Previous transition"><svg class="icon"><use href="#prevt"/></svg></button>
      <button class="tool" aria-label="Next transition"><svg class="icon"><use href="#nextt"/></svg></button>
      <button class="tool" aria-label="Previous falling edge"><svg class="icon"><use href="#fall"/></svg></button>
      <button class="tool" aria-label="Next falling edge"><svg class="icon"><use href="#fall2"/></svg></button>
      <button class="tool" aria-label="Previous rising edge"><svg class="icon"><use href="#rise"/></svg></button>
      <button class="tool" aria-label="Next rising edge"><svg class="icon"><use href="#rise2"/></svg></button>
    </div>
    <div class="group g-search">
      <button class="tool" aria-label="Expand drivers"><svg class="icon"><use href="#merge"/></svg></button><button class="drop small" aria-label="Drivers menu"></button>
      <button class="tool" aria-label="Expand readers"><svg class="icon"><use href="#split"/></svg></button><button class="drop small" aria-label="Readers menu"></button>
      <button class="tool" aria-label="Trace"><svg class="icon"><use href="#chip"/></svg></button>
      <i class="sep"></i>
      <label for="search" class="dim">Search:</label>
      <select id="search" class="combo dim"><option></option></select>
      <button class="tool" aria-label="Find previous"><svg class="icon"><use href="#findp"/></svg></button>
      <button class="tool" aria-label="Find next"><svg class="icon"><use href="#findn"/></svg></button>
      <button class="tool" aria-label="Search options"><svg class="icon"><use href="#findo"/></svg></button>
    </div>
    <div class="group g-zoom">
      <button class="tool" aria-label="Zoom in"><svg class="icon"><use href="#zin"/></svg></button>
      <button class="tool" aria-label="Zoom out"><svg class="icon"><use href="#zout"/></svg></button>
      <button class="tool" aria-label="Zoom full"><svg class="icon"><use href="#zfull"/></svg></button>
      <button class="tool" aria-label="Zoom to cursor"><svg class="icon"><use href="#zcur"/></svg></button>
      <button class="tool" aria-label="Zoom between cursors"><svg class="icon"><use href="#ztwo"/></svg></button>
      <button class="tool" aria-label="Zoom other"><svg class="icon"><use href="#zother"/></svg></button>
    </div>
  </div>

  <div class="row">
    <div class="group first g-edges">
      <button class="tool boxed sunk" aria-label="Sharp wave"><svg class="icon"><use href="#w1"/></svg></button>
      <button class="tool boxed" aria-label="Filled wave"><svg class="icon"><use href="#w2"/></svg></button>
      <button class="tool boxed" aria-label="Dense wave"><svg class="icon"><use href="#w3"/></svg></button>
      <i class="sep"></i>
      <button class="tool" aria-label="Hatch"><svg class="icon"><use href="#w4"/></svg></button>
      <button class="tool" aria-label="Hatch edge"><svg class="icon"><use href="#w5"/></svg></button>
      <button class="tool" aria-label="Edge"><svg class="icon"><use href="#w6"/></svg></button>
      <button class="tool" aria-label="Marked edge"><svg class="icon"><use href="#w7"/></svg></button>
    </div>
  </div>
</section>

<main class="wave">
  <header class="wavebar">
    <svg width="11" height="14"><path fill="#eee" d="M0 0h11v3H0z"/><path fill="#111" d="M0 3h10v10H0z"/><path fill="none" stroke="#0f4" d="M0 7.500h3v3h1v-4h4"/><path stroke="#44f" d="M4 10.500h5"/></svg>
    <h2>Wave - Default</h2>
    <span class="bars"></span><span class="grip"></span><span class="bars"></span>
    <button aria-label="Minimize pane"><svg width="11" height="12"><path fill="#111" d="M2 5h8v2H2z"/></svg></button>
    <button aria-label="Undock pane"><svg width="11" height="12"><path fill="none" stroke="#111" d="M2.500 5.500h5v5h-5zM5 8l5-5M6 2.500h4.500V7"/></svg></button>
  </header>
  <div class="panes">
    <div class="cell head tools"><svg class="icon"><use href="#objects"/></svg><button class="drop" aria-label="Objects menu"></button></div>
    <div class="cell head msgs">Msgs</div>
    <div class="cell head black"><svg class="plot"><path stroke="#ecc21a" d="M3.500 1v18"/></svg></div>

    <div class="cell names">
      <ul>
        <li><svg class="icon"><use href="#gem"/><use href="#gem-in"/></svg>/dclk_top/clk_50</li>
        <li><svg class="icon"><use href="#gem"/><use href="#gem-in"/></svg>/dclk_top/sw</li>
        <li><svg class="icon"><use href="#gem"/><use href="#gem-out"/></svg>/dclk_top/dclk_5</li>
      </ul>
      <div class="insert"><svg width="5" height="9"><path fill="none" stroke="#111" d="M.5 1l3 3.500-3 3.500z"/></svg><hr></div>
    </div>
    <div class="cell values">
      <ul><li>1</li><li>1</li><li>1</li></ul>
      <div class="insert"><hr></div>
    </div>
    <div class="cell black"><svg class="plot" id="plot" role="img" aria-label="Waveforms"></svg></div>

    <div class="cell foot">
      <div class="now"><span class="minis">
        <svg width="40" height="20"><path fill="#445" d="M5 13l2-5 3-1 2 2 2-2v6z"/><path stroke="#49e" d="M5 14.500h9"/><path fill="#bcdcff" stroke="#68a" d="M16.500 6.500h10v7h-10z"/><path stroke="#38c" d="M18 9.500h7M18 11.500h5"/><circle class="smooth" cx="34" cy="10" r="5" fill="#58b858"/><path stroke="#fff" stroke-width="2" d="M31 10h6M34 7v6"/></svg>
      </span>Now</div>
      <div class="cursor"><span class="minis">
        <svg width="44" height="18"><path fill="none" stroke="#ddd" stroke-width="2" d="M10 9V5h4v4"/><path fill="#f0b030" stroke="#a86808" d="M7.500 8.500h9v6h-9z"/><path class="smooth" fill="none" stroke="#a8ccff" stroke-width="3" d="M21 14l6-6M26 4l1 4 4-1"/><circle class="smooth" cx="38" cy="8" r="5" fill="#e83830"/><path stroke="#fff" stroke-width="2" d="M35 8h6"/></svg>
      </span>Cursor 1</div>
    </div>
    <div class="cell foot">
      <div class="now">200 ns</div>
      <div class="cursor">0.00 ns</div>
    </div>
    <div class="cell black foot"><svg class="plot" id="ruler" role="img" aria-label="Time ruler"></svg></div>
  </div>
</main>
<script src="script.js"></script>
</body>
</html>
```
FILE: styles.css
```css
* { box-sizing: border-box; }
body {
  margin: 0;
  height: 100vh;
  display: flex;
  flex-direction: column;
  overflow: hidden;
  background: #f0f0f0;
  color: #000;
  font-family: "DejaVu Sans Condensed", "DejaVu Sans", sans-serif;
  font-size: 11px;
}
button {
  padding: 0;
  border: 0;
  background: none;
  font: inherit;
  color: inherit;
  flex: none;
}
h1, h2, ul { margin: 0; padding: 0; font-weight: normal; }
svg { display: block; flex: none; shape-rendering: crispEdges; }
.sprite { position: absolute; width: 0; height: 0; }
.icon { width: 18px; height: 18px; }
.smooth, #gem, #gem-in, #gem-out, #objects, #stepin, #stepover, #stepout, #instin, #instover, #instout,
#up, #left, #hand, #zin, #zout, #zfull, #scroll, #plus, #minus, #pen, #traffic, #go {
  shape-rendering: geometricPrecision;
}

.titlebar {
  display: flex;
  align-items: center;
  height: 18px;
  gap: 4px;
  background: #fff;
  font-family: Roboto, "Noto Sans", sans-serif;
}
.titlebar > .icon { margin: -4px 0 0 -1px; }
.titlebar h1 { flex: 1; margin-top: -2px; font-size: 12px; line-height: 16px; white-space: nowrap; }
.winbtns { display: flex; gap: 33px; margin-right: -6px; margin-top: -4px; }

.menubar {
  display: flex;
  align-items: flex-start;
  gap: 14px;
  height: 26px;
  padding-top: 6px;
  border-bottom: 1px solid #a0a0a0;
  background: linear-gradient(#fff 23px, #f0f0f0 23px);
  font-family: Roboto, "Noto Sans", sans-serif;
  font-size: 12px;
}
.menubar button { line-height: 18px; }

.toolbars { border-bottom: 1px solid #a0a0a0; padding-bottom: 1px; }
.row { display: flex; height: 32px; }
.spacer { flex: 0 1 234px; }
.group {
  position: relative;
  display: flex;
  align-items: center;
  height: 32px;
  flex: none;
  padding: 0 0 1px 12px;
  border-top: 1px solid #fff;
  border-right: 2px solid #696969;
  border-bottom: 1px solid #696969;
  margin-left: 2px;
}
.group::before {
  content: "";
  position: absolute;
  left: 3px;
  top: 0;
  bottom: 1px;
  width: 3px;
  border-left: 1px solid #fff;
  border-right: 1px solid #696969;
}
.group.first { margin-left: 0; padding-left: 3px; }
.group.first::before { display: none; }
.g-file { width: 358px; }
.row .g-compile { width: 126px; margin-left: 0; }
.g-sim { width: 418px; }
.g-step { width: 169px; }
.g-layout { width: 207px; gap: 5px; padding-left: 14px; }
.first.g-columns { width: 326px; gap: 5px; padding-left: 9px; }
.g-bookmark { width: 153px; padding-left: 10px; }
.g-filter { width: 168px; }
.g-mode { width: 179px; }
.g-cursor { width: 193px; padding-left: 10px; }
.g-search { width: 365px; padding-left: 9px; padding-right: 5px; }
.g-zoom { width: 149px; padding-left: 10px; }
.first.g-edges { width: 187px; padding-left: 5px; }

.tool { display: flex; justify-content: center; align-items: center; width: 22px; height: 22px; }
.tool.boxed { width: 20px; height: 20px; margin: 0 3px; border: 1px solid; border-color: #fff #696969 #696969 #fff; }
.tool.sunk { background: #fff; border-color: #a0a0a0 #fff #fff #a0a0a0; }
.drop { width: 9px; height: 20px; display: flex; justify-content: center; align-items: center; }
.drop::before { content: ""; border: 3px solid transparent; border-top-color: #111; border-bottom: 0; }
.drop.small::before { border-width: 2px 2px 0; border-top-color: #444; }
.sep {
  flex: none;
  width: 11px;
  height: 16px;
  background: repeating-linear-gradient(#111 0 1px, transparent 1px 2px) 5px 0 / 1px 100% no-repeat;
}
label { flex: none; line-height: 16px; }
.dim { color: #787878; }
.combo {
  --arrow: url("data:image/svg+xml,%3Csvg xmlns='http://www.w3.org/2000/svg' width='18' height='18' shape-rendering='crispEdges'%3E%3Cpath stroke='%23fff' d='M.5 0v18M0 .5h18'/%3E%3Cpath fill='none' stroke='%23696969' d='M17.500 0v17.500H0'/%3E%3Cpath d='M3 6h13l-6.500 7z'/%3E%3C/svg%3E");
  appearance: none;
  flex: 1;
  min-width: 0;
  height: 20px;
  margin-right: 6px;
  padding: 0 22px 0 3px;
  border: 0;
  border-radius: 0;
  background:
    var(--arrow) right top no-repeat,
    linear-gradient(#a0a0a0, #a0a0a0) left top / calc(100% - 20px) 1px no-repeat,
    linear-gradient(#a0a0a0, #a0a0a0) left top / 1px 100% no-repeat,
    linear-gradient(#fff, #fff) left bottom / calc(100% - 20px) 1px no-repeat,
    linear-gradient(#fff, #fff) right 20px top / 1px 100% no-repeat,
    #f0f0f0;
  color: #000;
  font: 12px "Liberation Mono", monospace;
}
.combo.dim {
  --arrow: url("data:image/svg+xml,%3Csvg xmlns='http://www.w3.org/2000/svg' width='18' height='18' shape-rendering='crispEdges'%3E%3Cdefs%3E%3Cpattern id='p' width='2' height='2' patternUnits='userSpaceOnUse'%3E%3Cpath d='M0 0h1v1H0zM1 1h1v1H1z'/%3E%3C/pattern%3E%3C/defs%3E%3Cpath stroke='%23fff' d='M.5 0v18M0 .5h18'/%3E%3Cpath fill='none' stroke='%23696969' d='M17.500 0v17.500H0'/%3E%3Cpath fill='url(%23p)' d='M3 6h13l-6.500 7z'/%3E%3C/svg%3E");
  color: #787878;
}
.g-search label { margin: 0 6px 0 7px; }
.g-search .combo { margin-right: 1px; }
.g-search .tool:last-child { margin-left: 2px; }
.spin { display: flex; margin: 0 5px 0 4px; }
.spin input {
  width: 60px;
  height: 20px;
  padding: 0 2px;
  border: 1px solid;
  border-color: #a0a0a0 #fff #fff #a0a0a0;
  background: #fff;
  font: 12px "Liberation Mono", monospace;
  text-align: right;
}
.spin div { display: flex; flex-direction: column; }
.spin button { display: flex; align-items: center; justify-content: center; width: 13px; height: 10px; border: 1px solid; border-color: #fff #696969 #696969 #fff; }
.spin button::before { content: ""; border: 4px solid transparent; }
.spin .inc::before { border-top: 0; border-bottom-color: #111; }
.spin .dec::before { border-bottom: 0; border-top-color: #111; }

.wave { flex: 1; min-height: 0; display: flex; flex-direction: column; }
.wavebar {
  display: flex;
  align-items: center;
  height: 20px;
  flex: none;
  border-top: 1px solid #fff;
  border-bottom: 1px solid #fff;
  background: #99b4d1;
}
.wavebar h2 { margin: 0 6px 0 3px; font-size: 11px; line-height: 16px; white-space: nowrap; }
.bars {
  flex: 1;
  height: 8px;
  background: linear-gradient(#e0ffff 0 1px, transparent 1px 2px, #000 2px 3px, transparent 3px 5px, #e0ffff 5px 6px, transparent 6px 7px, #000 7px 8px);
}
.grip {
  width: 20px;
  height: 8px;
  margin: 0 1px;
  background: conic-gradient(#fff 25%, transparent 0 50%, #111 0 75%, transparent 0) 0 0 / 3px 3px;
}
.wavebar button { width: 12px; height: 13px; margin-left: 4px; background: #f0f0f0; border-right: 1px solid #696969; border-bottom: 1px solid #696969; overflow: hidden; }
.wavebar button:last-child { width: 10px; }
.panes {
  flex: 1;
  min-height: 0;
  display: grid;
  grid-template-columns: 154px 100px 1fr;
  grid-template-rows: 19px 1fr 34px;
  gap: 2px 3px;
  background: #fff;
  border-top: 1px solid #808080;
}
.cell { background: #808080; color: #fff; overflow: hidden; min-width: 0; }
.cell.black { background: #000; }
.head { display: flex; align-items: center; }
.tools { padding-left: 5px; }
.msgs { justify-content: flex-end; padding-right: 6px; }
.names { margin-left: 4px; }
.cell ul { list-style: none; padding-top: 2px; }
.cell li { display: flex; align-items: center; height: 17px; line-height: 17px; }
.names li { gap: 4px; padding-left: 18px; }
.values li { padding-left: 3px; }
.insert { display: flex; align-items: center; height: 9px; margin-top: -4px; padding: 0 4px 0 2px; }
.insert hr { flex: 1; height: 1px; margin: 0; border: 0; background: #000; }
.plot { width: 100%; height: 100%; font-size: 11px; fill: none; }
.plot text { fill: #00ff00; }
.plot .cursor-time { fill: #ffd000; }
.foot > div { position: relative; display: flex; align-items: center; justify-content: flex-end; padding-right: 9px; }
.now { height: 22px; background: #fff; color: #000; }
.cursor { height: 18px; }
.minis { margin-right: auto; background: #808080; height: 100%; display: flex; align-items: center; }
```
FILE: script.js
```js
const NS = "http://www.w3.org/2000/svg";
const X0 = 3;
const STEP = 62;

function add(parent, tag, attrs, text) {
  const el = document.createElementNS(NS, tag);
  for (const key in attrs) el.setAttribute(key, attrs[key]);
  if (text) el.textContent = text;
  parent.appendChild(el);
}

const plot = document.getElementById("plot");
for (let i = 1; i <= 20; i++) {
  const x = X0 + i * STEP + 0.5;
  add(plot, "line", { x1: x, x2: x, y1: 0, y2: "100%", stroke: "#808080" });
}
let clock = "M3 4.5";
for (let i = 1; i <= 20; i++) {
  clock += "H" + (X0 + i * STEP + 0.5) + "V" + (i % 2 ? 16.5 : 4.5);
}
add(plot, "path", { d: clock, stroke: "#00ff00" });
add(plot, "path", { d: "M3 21.500H1243", stroke: "#00ff00" });
add(plot, "path", { d: "M3 50.500H623.5V38.500H1243", stroke: "#00ff00" });
add(plot, "line", { x1: 3.5, x2: 3.5, y1: 0, y2: "100%", stroke: "#ecc21a" });
add(plot, "path", { d: "M3.500 5v6M3.500 22v6M3.500 45v5", stroke: "#ff2020" });

const ruler = document.getElementById("ruler");
for (let i = 1; i <= 209; i++) {
  const x = Math.round(X0 + i * 6.2) + 0.5;
  add(ruler, "line", { x1: x, x2: x, y1: i % 10 ? 3 : 0, y2: 7, stroke: "#00ff00" });
}
add(ruler, "text", { x: 1, y: 20 }, "0 ns");
for (let t = 20; t <= 200; t += 20) {
  add(ruler, "text", { x: X0 + t * 6.2, y: 20, "text-anchor": "middle" }, t + " ns");
}
add(ruler, "path", { d: "M3 22.500H1305", stroke: "#808080" });
add(ruler, "path", { d: "M3.500 0V34M3.500 23.500H44.500V34", stroke: "#ecc21a" });
add(ruler, "text", { x: 5, y: 36, class: "cursor-time" }, "0.00 ns");
```
